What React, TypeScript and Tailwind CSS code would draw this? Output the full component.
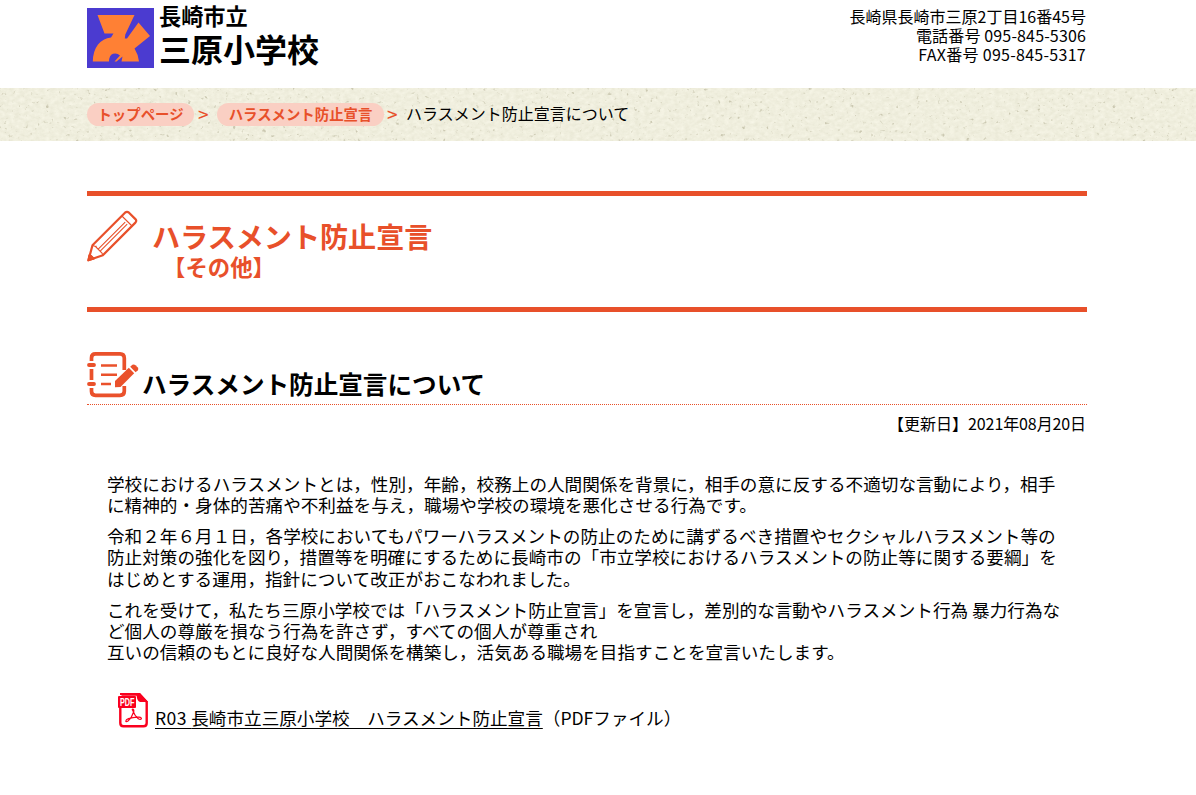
import React from 'react';

const paragraphs = [
    [
        '学校におけるハラスメントとは，性別，年齢，校務上の人間関係を背景に，相手の意に反する不適切な言動により，相手',
        'に精神的・身体的苦痛や不利益を与え，職場や学校の環境を悪化させる行為です。',
    ],
    [
        '令和２年６月１日，各学校においてもパワーハラスメントの防止のために講ずるべき措置やセクシャルハラスメント等の',
        '防止対策の強化を図り，措置等を明確にするために長崎市の「市立学校におけるハラスメントの防止等に関する要綱」を',
        'はじめとする運用，指針について改正がおこなわれました。',
    ],
    [
        'これを受けて，私たち三原小学校では「ハラスメント防止宣言」を宣言し，差別的な言動やハラスメント行為 暴力行為な',
        'ど個人の尊厳を損なう行為を許さず，すべての個人が尊重され',
        '互いの信頼のもとに良好な人間関係を構築し，活気ある職場を目指すことを宣言いたします。',
    ],
];

const SchoolLogo = () => (
    <svg className="h-[60px] w-[67px] shrink-0" viewBox="0 0 67 60">
        <rect width="67" height="60" fill="#4b3bd0" />
        <path
            d="M10.5 7H47.5L38.3 26.5L37.8 30.5H40L51.5 14.5L63 28L47.5 40.5Q51 46 52 53.5H34.5L35.5 48.5L29.5 53.5H27.5L33 47.5Q30 44.5 26 45.8Q22 47.5 22 53.5H5.8Q6 43 11 36.5Q16 30.5 24 29.5L26.5 25.5H17.5Z"
            fill="#ff8034"
        />
    </svg>
);

const PencilIcon = () => (
    <svg className="mt-[14px] h-[52px] w-[51px] shrink-0" viewBox="0 0 51 52" fill="none" stroke="#e8502a">
        <path d="M1.4 50.3L5.5 35.2L38 2.7Q40 1 42 2.7L48.4 9.1Q50 10.8 48.4 12.6L15.8 45.3Z" strokeWidth="2.2" strokeLinejoin="round" />
        <path d="M34.9 6L45 16M5.8 35.5L8.5 36.5L15 43L15.8 45M8.7 36.7L9.5 36M11.2 39.2L38.2 12.2M13.2 41.2L40.2 14.2" strokeWidth="1.1" />
        <path d="M.8 50.8L2 44.5Q5.5 45 7.5 49Z" fill="#e8502a" />
    </svg>
);

const NoteIcon = () => (
    <svg className="mt-px h-[46px] w-[52px] shrink-0" viewBox="0 0 52 46" fill="none" stroke="#ea512b">
        <path d="M4.5 9V6Q4.5 1.9 8.5 1.9H33Q37.3 1.9 37.3 6.3V18M4.5 17V28M4.5 36V39.3Q4.5 43.3 8.5 43.3H33Q37.3 43.3 37.3 39.3V34" strokeWidth="3.7" />
        <path d="M2 13H7M2 32H7" strokeWidth="3.8" strokeLinecap="round" />
        <path d="M14 13.5H30M14 22.8H30M14 32H24" strokeWidth="2.6" />
        <path d="M28 29L41.8 15.8L47.2 21.3L33.5 35L28 35.3Z" fill="#ea512b" stroke="none" />
        <path d="M43.2 14.8L45.4 12.8Q47 11.8 48.5 13.2L50.8 15.5Q52 17 50.8 18.3L48.6 20.2Z" fill="#ea512b" stroke="none" />
    </svg>
);

const PdfIcon = () => (
    <svg className="h-[35px] w-[31px] shrink-0" viewBox="0 0 31 35">
        <path d="M3.5 1.5H21.5L28.7 9V30Q28.7 33.3 25.5 33.3H5.5Q2.3 33.3 2.3 30V3" fill="none" stroke="#fa001e" strokeWidth="2.4" />
        <path d="M2 0H22L30 9H22Q19 8 18.5 2H2Z" fill="#fa001e" />
        <rect y="3" width="18" height="12" rx="1" fill="#fa001e" />
        <text
            x="2"
            y="13"
            fill="#fff"
            fontSize="10.5"
            fontWeight="700"
            textLength="14.5"
            lengthAdjust="spacingAndGlyphs"
            fontFamily="Liberation Sans, sans-serif"
        >
            PDF
        </text>
        <path d="M14.8 17.5C12.8 15.5 16.9 15.3 15.6 19Q13.8 24.8 10 28C7 30 7 26.8 10.5 25.6Q16 23.7 21 24.1C25.5 24.7 23 27.7 20 25.4Q16.5 22.6 14.8 17.5Z" fill="none" stroke="#fa001e" strokeWidth="1.2" />
    </svg>
);

const PaperTexture = () => (
    <svg className="absolute inset-0 h-full w-full" aria-hidden="true">
        <filter id="grain" x="0" y="0" width="100%" height="100%" colorInterpolationFilters="sRGB">
            <feTurbulence type="fractalNoise" baseFrequency="0.2 0.28" numOctaves="3" seed="4" />
            <feColorMatrix values="0.07 0 0 0 .905  0.07 0 0 0 .9  0.09 0 0 0 .825  0 0 0 0 1" />
        </filter>
        <filter id="flecks" x="0" y="0" width="100%" height="100%" colorInterpolationFilters="sRGB">
            <feTurbulence type="fractalNoise" baseFrequency="0.24" numOctaves="2" seed="11" />
            <feColorMatrix values="0 0 0 0 .8  0 0 0 0 .79  0 0 0 0 .7  6 0 0 0 -4.1" />
        </filter>
        <rect width="100%" height="100%" filter="url(#grain)" />
        <rect width="100%" height="100%" filter="url(#flecks)" />
    </svg>
);

export default function App() {
    return (
        <div className="min-h-[795px] overflow-hidden bg-white font-['Noto_Sans_CJK_JP',sans-serif] text-base text-black whitespace-nowrap">
            <header className="ml-[87px] flex h-[88px] w-[1000px] justify-between pt-2">
                <div className="flex">
                    <SchoolLogo />
                    <h1 className="ml-[5px] font-bold">
                        <span className="-mt-[6px] block text-[22.2px] leading-[26px]">長崎市立</span>
                        <span className="mt-px block text-[32px] leading-[39px]">三原小学校</span>
                    </h1>
                </div>
                <address className="-mt-px mr-px text-right leading-[19px] not-italic">
                    <p>長崎県長崎市三原2丁目16番45号</p>
                    <p className="tracking-[0.15px]">電話番号 095-845-5306</p>
                    <p className="tracking-[0.28px]">FAX番号 095-845-5317</p>
                </address>
            </header>

            <nav className="relative h-[53px] bg-[#efeedd]">
                <PaperTexture />
                <div className="relative ml-[87px] flex h-[53px] items-center text-[#e8502a]">
                    <a className="flex h-[23px] w-[107px] items-center justify-center rounded-full bg-[#facfc3] text-[14.4px] font-bold">
                        <span className="-mt-0.5">トップページ</span>
                    </a>
                    <span className="w-[23px] pl-1 text-[19px]">&gt;</span>
                    <a className="flex h-[23px] w-[167px] items-center justify-center rounded-full bg-[#facfc3] text-[14.4px] font-bold">
                        <span className="-mt-0.5">ハラスメント防止宣言</span>
                    </a>
                    <span className="w-[22px] pl-[3px] text-[19px]">&gt;</span>
                    <span className="-mt-1 text-black">ハラスメント防止宣言について</span>
                </div>
            </nav>

            <main className="ml-[87px] w-[1000px]">
                <div className="mt-[50px] flex h-[121px] border-y-5 border-[#e8502a] text-[#e8502a]">
                    <PencilIcon />
                    <h2 className="ml-[14px] pt-[22px] font-bold">
                        <span className="block text-[28.1px] leading-[35px]">ハラスメント防止宣言</span>
                        <span className="ml-[11px] block text-[22.4px] leading-[27px]">【その他】</span>
                    </h2>
                </div>

                <div className="mt-[39px] flex h-[54px] border-b border-dotted border-[#e8502a]">
                    <NoteIcon />
                    <h3 className="ml-[3px] pt-[17px] text-[24.6px] leading-[30px] font-bold">ハラスメント防止宣言について</h3>
                </div>
                <p className="mt-2 mr-px text-right leading-5">
                    【更新日】<span className="tracking-[-0.1px]">2021年08月20日</span>
                </p>

                <div className="mt-[40px] ml-5 space-y-[10px] text-[17.6px] leading-[21.12px]">
                    {paragraphs.map((lines, i) => (
                        <p key={i} className="tracking-[0.02px]">
                            {lines.map((line) => (
                                <span key={line} className="block">{line}</span>
                            ))}
                        </p>
                    ))}
                </div>

                <div className="mt-[31px] ml-[31px] flex text-[17.6px]">
                    <PdfIcon />
                    <p className="ml-1.5 pt-[14px] leading-[22px]">
                        <a className="underline decoration-1 underline-offset-[3px]">
                            <span className="tracking-[0.4px]">R03 </span>長崎市立三原小学校　ハラスメント防止宣言
                        </a>
                        （PDFファイル）
                    </p>
                </div>
            </main>
        </div>
    );
}
